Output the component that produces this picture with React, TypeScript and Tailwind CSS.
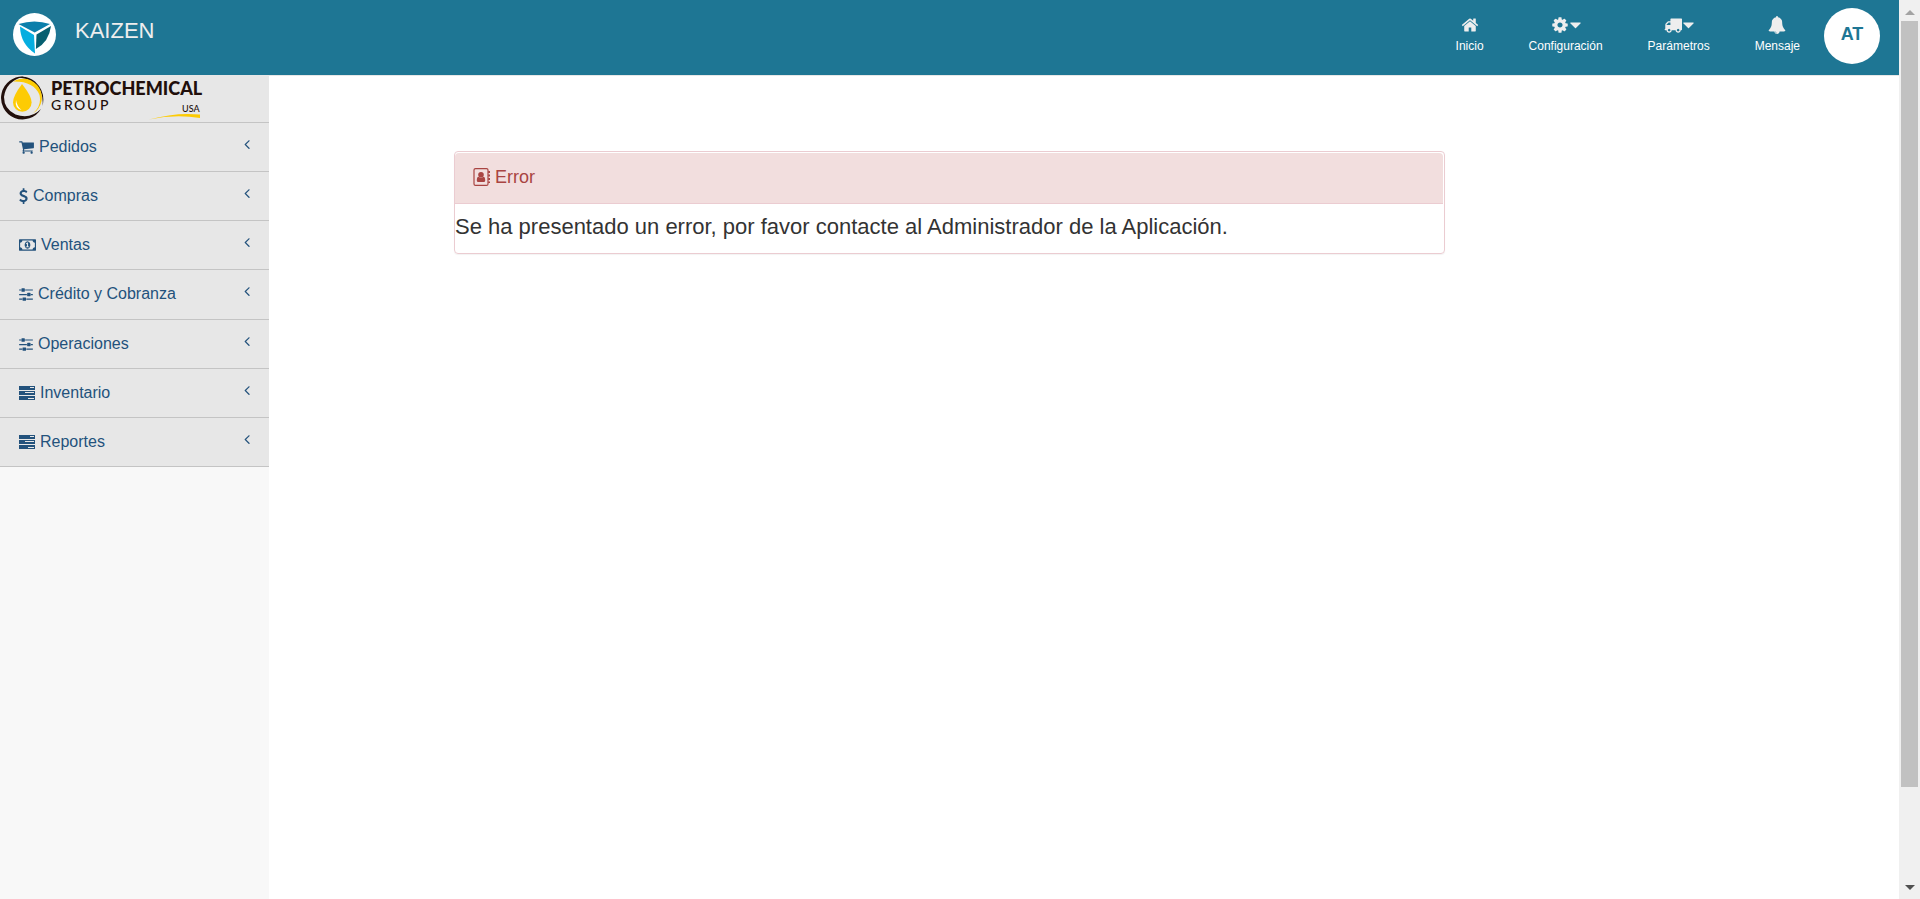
import React from "react";

type IconProps = { d: string; box?: string; className: string };

function Icon({ d, box = "0 0 1792 1792", className }: IconProps) {
  return (
    <svg viewBox={box} fill="currentColor" aria-hidden="true" className={`shrink-0 ${className}`}>
      <path d={d} fillRule="evenodd" />
    </svg>
  );
}

const HOME =
  "M1472 992v480q0 26-19 45t-45 19h-384v-384h-256v384h-384q-26 0-45-19t-19-45v-480q0-1 .5-3t.5-3l575-474 575 474q1 2 1 6zm223-69l-62 74q-8 9-21 11h-3q-13 0-21-7l-692-577-692 577q-12 8-24 7-13-2-21-11l-62-74q-8-10-7-23.5t11-21.5l719-599q32-26 76-26t76 26l244 204v-195q0-14 9-23t23-9h192q14 0 23 9t9 23v408l219 182q10 8 11 21.5t-7 23.5z";
const COG =
  "M1152 896q0-106-75-181t-181-75-181 75-75 181 75 181 181 75 181-75 75-181zm512-109v222q0 12-8 23t-20 13l-185 28q-19 54-39 91 35 50 107 138 10 12 10 25t-9 23q-27 37-99 108t-94 71q-12 0-26-9l-138-108q-44 23-91 38-16 136-29 186-7 28-36 28h-222q-14 0-24.5-8.5t-11.5-21.5l-28-184q-49-16-90-37l-141 107q-10 9-25 9-14 0-25-11-126-114-165-168-7-10-7-23 0-12 8-23 15-21 51-66.5t54-70.5q-27-50-41-99l-183-27q-13-2-21-12.5t-8-23.5v-222q0-12 8-23t19-13l186-28q14-46 39-92-40-57-107-138-10-12-10-24 0-10 9-23 26-36 98.5-107.5t94.5-71.5q13 0 26 10l138 107q44-23 91-38 16-136 29-186 7-28 36-28h222q14 0 24.5 8.5t11.5 21.5l28 184q49 16 90 37l142-107q9-9 24-9 13 0 25 10 129 119 165 170 7 8 7 22 0 12-8 23-15 21-51 66.5t-54 70.5q26 50 41 98l183 28q13 2 21 12.5t8 23.5z";
const BELL =
  "M912 1696q0-16-16-16-59 0-101.5-42.5t-42.5-101.5q0-16-16-16t-16 16q0 73 51.5 124.5t124.5 51.5q16 0 16-16zm816-288q0 52-38 90t-90 38h-448q0 106-75 181t-181 75-181-75-75-181h-448q-52 0-90-38t-38-90q50-42 91-88t85-119.5 74.5-158.5 50-206 19.5-260q0-152 117-282.5t307-158.5q-8-19-8-39 0-40 28-68t68-28 68 28 28 68q0 20-8 39 190 28 307 158.5t117 282.5q0 139 19.5 260t50 206 74.5 158.5 85 119.5 91 88z";
const TRUCK =
  "M640 1408q0-52-38-90t-90-38-90 38-38 90 38 90 90 38 90-38 38-90zm-384-512h384v-256h-158q-13 0-22 9l-195 195q-9 9-9 22v30zm1280 512q0-52-38-90t-90-38-90 38-38 90 38 90 90 38 90-38 38-90zm256-1088v1024q0 15-4 26.5t-13.5 18.5-16.5 11.5-23.5 6-22.5 2-25.5 0-22.5-.5q0 106-75 181t-181 75-181-75-75-181h-384q0 106-75 181t-181 75-181-75-75-181h-64q-3 0-22.5.5t-25.5 0-22.5-2-23.5-6-16.5-11.5-13.5-18.5-4-26.5q0-26 19-45t45-19v-320q0-8-.5-35t0-38 2.5-34.5 6.5-37 14-30.5 22.5-30l198-198q19-19 50.5-32t58.5-13h160v-192q0-26 19-45t45-19h1024q26 0 45 19t19 45z";
const CARET =
  "M1408 704q0 26-19 45l-448 448q-19 19-45 19t-45-19l-448-448q-19-19-19-45t19-45 45-19h896q26 0 45 19t19 45z";
const CART =
  "M704 1536q0 52-38 90t-90 38-90-38-38-90 38-90 90-38 90 38 38 90zm896 0q0 52-38 90t-90 38-90-38-38-90 38-90 90-38 90 38 38 90zm128-1088v512q0 24-16.5 42.5t-40.5 21.5l-1044 122q13 60 13 70 0 16-24 64h920q26 0 45 19t19 45-19 45-45 19h-1024q-26 0-45-19t-19-45q0-11 8-31.5t16-36 21.5-40 15.5-29.5l-177-823h-204q-26 0-45-19t-19-45 19-45 45-19h256q16 0 28.5 6.5t19.5 15.5 13 24.5 8 26 5.5 29.5 4.5 26h1201q26 0 45 19t19 45z";
const DOLLAR =
  "M1362 1185q0 153-99.5 263.5t-258.5 136.5v175q0 14-9 23t-23 9h-135q-13 0-22.5-9.5t-9.5-22.5v-175q-66-9-127.5-31t-101.5-44.5-74-48-46.5-37.5-17.5-18q-17-21-2-41l103-135q7-10 23-12 15-2 24 9l2 2q113 99 243 125 37 8 74 8 81 0 142.5-43t61.5-122q0-28-15-53t-33.5-42-58.5-37.5-66-32-80-32.5q-39-16-61.5-25t-61.5-26.5-62.5-31-56.5-35.5-53.5-42.5-43.5-49-35.5-58-21-66.5-8.5-78q0-138 98-242t255-134v-180q0-13 9.5-22.5t22.5-9.5h135q14 0 23 9t9 23v176q57 6 110.5 23t87 33.5 63.5 37.5 39 29 15 14q17 18 5 38l-81 146q-8 15-23 16-14 3-27-7-3-3-14.5-12t-39-26.5-58.5-32-74.5-26-85.5-11.5q-95 0-155 43t-60 111q0 26 8.5 48t29.5 41.5 39.5 33 56 31 60.5 27 70 27.5q53 20 81 31.5t76 35 75.5 42.5 62 50 53 63.5 31.5 76.5 13 94z";
const MONEY =
  "M704 1152h384v-96h-128v-448h-114l-148 137 77 80q42-37 55-57h2v288h-128v96zm512-256q0 70-21 142t-59.5 134-101.5 101-138 39-138-39-101.5-101-59.5-134-21-142 21-142 59.5-134 101.5-101 138-39 138 39 101.5 101 59.5 134 21 142zm512 256v-512q-106 0-181-75t-75-181h-1152q0 106-75 181t-181 75v512q106 0 181 75t75 181h1152q0-106 75-181t181-75zm128-832v1152q0 26-19 45t-45 19h-1792q-26 0-45-19t-19-45v-1152q0-26 19-45t45-19h1792q26 0 45 19t19 45z";
const SLIDERS =
  "M480 1408v128h-352v-128h352zm352-128q26 0 45 19t19 45v256q0 26-19 45t-45 19h-256q-26 0-45-19t-19-45v-256q0-26 19-45t45-19h256zm160-384v128h-864v-128h864zm-640-512v128h-224v-128h224zm1312 1024v128h-736v-128h736zm-960-1152q26 0 45 19t19 45v256q0 26-19 45t-45 19h-256q-26 0-45-19t-19-45v-256q0-26 19-45t45-19h256zm640 512q26 0 45 19t19 45v256q0 26-19 45t-45 19h-256q-26 0-45-19t-19-45v-256q0-26 19-45t45-19h256zm320 128v128h-224v-128h224zm0-512v128h-864v-128h864z";
const TASKS =
  "M0 1H16V5H0ZM11 2V3H15V2ZM0 6H16V10H0ZM6 7V8H15V7ZM0 11H16V15H0ZM9 13V14H15V13Z";
const ANGLE_LEFT =
  "M1203 544q0 13-10 23l-393 393 393 393q10 10 10 23t-10 23l-50 50q-10 10-23 10t-23-10l-466-466q-10-10-10-23t10-23l466-466q10-10 23-10t23 10l50 50q10 10 10 23z";

const menu = [
  { label: "Pedidos", d: CART, box: "64 0 1664 1792", size: "w-[15px] h-4" },
  { label: "Compras", d: DOLLAR, box: "384 0 1024 1792", size: "w-[9px] h-4" },
  { label: "Ventas", d: MONEY, box: "-64 0 1920 1792", size: "w-[17px] h-4" },
  { label: "Crédito y Cobranza", d: SLIDERS, box: "128 0 1536 1792", size: "w-[14px] h-4" },
  { label: "Operaciones", d: SLIDERS, box: "128 0 1536 1792", size: "w-[14px] h-4" },
  { label: "Inventario", d: TASKS, box: "0 0 16 16", size: "w-4 h-4" },
  { label: "Reportes", d: TASKS, box: "0 0 16 16", size: "w-4 h-4" },
];

const nav = [
  { label: "Inicio", d: HOME, caret: false },
  { label: "Configuración", d: COG, caret: true },
  { label: "Parámetros", d: TRUCK, caret: true },
  { label: "Mensaje", d: BELL, caret: false },
];

function BrandMark() {
  return (
    <svg viewBox="0 0 43 43" className="size-[43px] shrink-0" aria-hidden="true">
      <circle cx="21.5" cy="21.5" r="21.5" fill="#fff" />
      <path d="M5.5 11Q21.5 6 37 11L21.7 19.6Z" fill="#0b7fab" />
      <path d="M7 13.5L21 22L22 40.500Q7.500 31 7 13.500Z" fill="#06aee0" />
      <path d="M38 13L23.500 21.600L22.900 36Q36 29 38 13Z" fill="#065f70" />
    </svg>
  );
}

function CompanyLogo() {
  return (
    <svg viewBox="0 1 210 46" className="h-[46px] w-[210px]" role="img" aria-label="Petrochemical Group USA">
      <path d="M24 1.500A21.500 21.500 0 1 0 41 34Q30 45 15.500 39.500Q4 34 4 22Q6 6 24 1.500Z" fill="#210f0b" />
      <path d="M17 2.500Q27 0 35 6.500Q46 17 42.500 31Q44 17 34.500 8.500Q27 2.500 17 2.500Z" fill="#210f0b" />
      <path d="M13 6.500A18 18 0 1 1 33 38.500Q42 31 39.500 20Q34 6 13 6.500Z" fill="#fdcb04" />
      <path d="M22 9Q13 21 13 27.500A9.300 9.300 0 0 0 31.600 27.500Q31.600 21 22 9Z" fill="#fdcb04" />
      <path d="M16 25Q14.500 33 21.500 35Q17 31.500 16 25Z" fill="#fff" />
      <text x="51" y="20" fill="#210f0b" className="font-['Lato','Liberation_Sans',sans-serif] text-[18px] font-black">
        PETROCHEMICAL
      </text>
      <g fill="#210f0b" className="font-['Lato','Liberation_Sans',sans-serif] text-[14px] font-medium">
        <text x="51" y="35">G</text>
        <text x="64" y="35">R</text>
        <text x="74" y="35">O</text>
        <text x="87" y="35">U</text>
        <text x="100" y="35">P</text>
      </g>
      <text x="182" y="37" fill="#210f0b" className="font-['Lato','Liberation_Sans',sans-serif] text-[9px] font-medium">
        USA
      </text>
      <path d="M149 44.500Q176 37 200 39.500V43Q175 39 149 44.500Z" fill="#fdcb04" />
    </svg>
  );
}

function AddressBook() {
  return (
    <svg viewBox="0 0 18 18" className="size-[18px] shrink-0" aria-hidden="true">
      <rect x="1" y="0.600" width="14" height="16.800" rx="1.500" fill="none" stroke="currentColor" strokeWidth="1.200" />
      <path d="M15.200 3h1.800v2h-1.800zM15.200 6.500h1.800v2h-1.800zM15.200 10h1.800v2h-1.800zM15.200 13.500h1.800v1.500h-1.800z" fill="currentColor" />
      <circle cx="8" cy="6.800" r="2.800" fill="currentColor" />
      <path d="M5.500 8.800Q3.800 9 3.800 12.500Q3.800 14 5.200 14H10.800Q12.200 14 12.200 12.500Q12.200 9 10.500 8.800Q8 10.800 5.500 8.800Z" fill="currentColor" />
    </svg>
  );
}

function ScrollTrack() {
  return (
    <div aria-hidden="true" className="flex w-[21px] shrink-0 flex-col bg-[#f0f0f0] px-0.5">
      <div className="flex h-[21px] items-center justify-center text-[#a3a3a3]">
        <svg viewBox="0 0 10 5" className="mt-1 h-[5px] w-[10px]" fill="currentColor">
          <path d="M0 5L5 0L10 5Z" />
        </svg>
      </div>
      <div className="grow-[766] basis-0 bg-[#c1c1c1]" />
      <div className="grow-[91] basis-0" />
      <div className="flex h-[21px] items-center justify-center text-[#505050]">
        <svg viewBox="0 0 10 5" className="mb-0.5 h-[5px] w-[10px]" fill="currentColor">
          <path d="M0 0L5 5L10 0Z" />
        </svg>
      </div>
    </div>
  );
}

export default function App() {
  return (
    <div className="flex min-h-screen bg-white font-['Liberation_Sans',Arial,sans-serif] text-[#333]">
      <div className="flex min-w-0 grow flex-col">
        <header className="flex h-[76px] shrink-0 items-start justify-between border-b border-[#e7e7e7] bg-[#1e7694] pr-[19px] pl-[13px]">
          <a href="#inicio" className="flex gap-[19px] pt-[13px] text-[#eee]">
            <BrandMark />
            <span className="pt-[3px] text-[22px] leading-[30px]">KAIZEN</span>
          </a>
          <div className="flex pt-2">
            <nav className="flex gap-[45px] pt-2 pr-6">
              {nav.map((item) => (
                <a key={item.label} href={"#" + item.label.toLowerCase()} className="flex flex-col items-center text-[#eee]">
                  <span className="flex h-[18px] items-center gap-px">
                    <Icon d={item.d} className="size-[18px]" />
                    {item.caret && <Icon d={CARET} box="384 0 1024 1792" className="h-[18px] w-[11px]" />}
                  </span>
                  <span className="text-xs leading-6 text-white">{item.label}</span>
                </a>
              ))}
            </nav>
            <button type="button" className="flex size-14 justify-center rounded-full bg-white pt-3.5 text-lg leading-6 font-bold text-[#1e7694]">
              AT
            </button>
          </div>
        </header>
        <div className="flex grow">
          <aside className="w-[269px] shrink-0 bg-[#f8f8f8]">
            <div className="h-[47px] border-b border-[#c4c4c4] bg-[#e7e7e7]">
              <CompanyLogo />
            </div>
            <ul className="grid h-[344px] auto-rows-fr">
              {menu.map((item) => (
                <li key={item.label} className="border-b border-[#c4c4c4] bg-[#e7e7e7]">
                  <a href={"#" + item.label.toLowerCase().split(" ")[0]} className="flex h-full items-center gap-[5px] pr-3.5 pl-[19px] text-base text-[#23527c]">
                    <Icon d={item.d} box={item.box} className={item.size} />
                    <span className="grow">{item.label}</span>
                    <Icon d={ANGLE_LEFT} className="mb-1.5 size-4" />
                  </a>
                </li>
              ))}
            </ul>
          </aside>
          <main className="grid grow grid-cols-[185fr_991fr_454fr] content-start pt-[75px]">
            <section className="col-start-2 rounded border border-[#ebccd1] pt-px pr-px shadow-[0_1px_1px_rgba(0,0,0,0.05)]">
              <h1 className="flex h-[51px] items-center gap-1 rounded-t-sm border-b border-[#ebccd1] bg-[#f2dede] pb-0.5 pl-[18px] text-lg text-[#a94442]">
                <AddressBook />
                Error
              </h1>
              <p className="h-[49px] pt-2 text-[22px] leading-[30px]">
                Se ha presentado un error, por favor contacte al Administrador de la Aplicación.
              </p>
            </section>
          </main>
        </div>
      </div>
      <ScrollTrack />
    </div>
  );
}
